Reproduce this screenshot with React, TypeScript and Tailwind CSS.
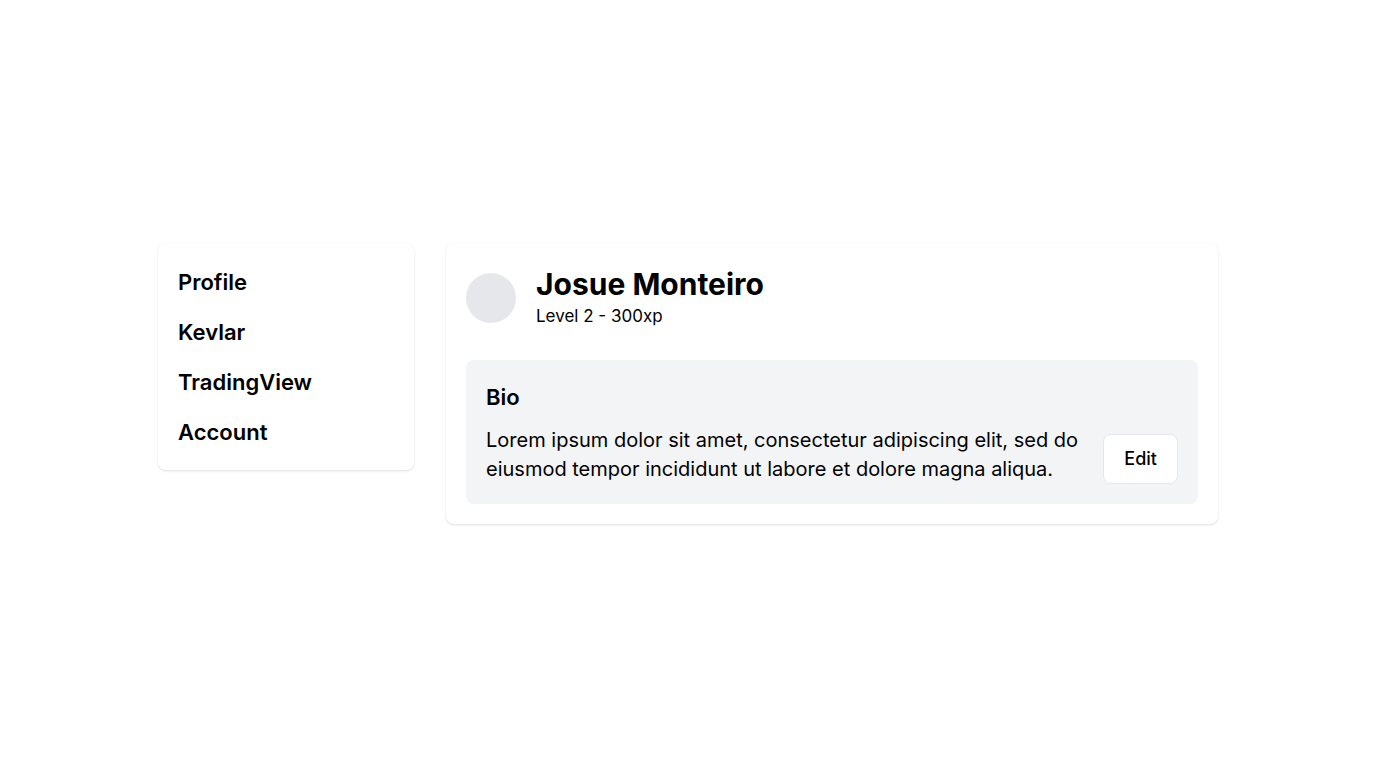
import React from "react";

export default function App() {
  return (
    <div
      className="min-h-screen w-full bg-white flex items-center justify-center text-black"
      style={{ fontFamily: "Inter, 'Noto Sans', sans-serif" }}
    >
      <div className="flex items-start gap-8">
        <nav className="w-64 bg-white rounded-lg shadow-sm px-5 py-4 flex flex-col gap-[6px]">
          {["Profile", "Kevlar", "TradingView", "Account"].map((item) => (
            <a key={item} className="h-[44px] flex items-center text-[22px] font-semibold cursor-pointer">
              {item}
            </a>
          ))}
        </nav>
        <main className="w-[772px] bg-white rounded-lg shadow-sm p-5">
          <div className="flex items-center gap-5 pt-[2px]">
            <div className="w-[50px] h-[50px] rounded-full bg-gray-200 shrink-0" />
            <div className="flex flex-col">
              <h1 className="text-3xl font-bold leading-9">Josue Monteiro</h1>
              <p className="text-[17px] leading-7">Level 2 - 300xp</p>
            </div>
          </div>
          <section className="mt-[30px] bg-gray-100 rounded-lg p-5">
            <h2 className="text-[22px] font-semibold leading-[34px] mb-3">Bio</h2>
            <div className="flex items-end gap-6">
              <p className="flex-1 text-xl leading-[29px]">
                Lorem ipsum dolor sit amet, consectetur adipiscing elit, sed do eiusmod tempor incididunt ut labore et dolore magna aliqua.
              </p>
              <button className="shrink-0 bg-white border border-gray-200 rounded-lg px-5 py-2.5 text-lg font-medium leading-7">
                Edit
              </button>
            </div>
          </section>
        </main>
      </div>
    </div>
  );
}
